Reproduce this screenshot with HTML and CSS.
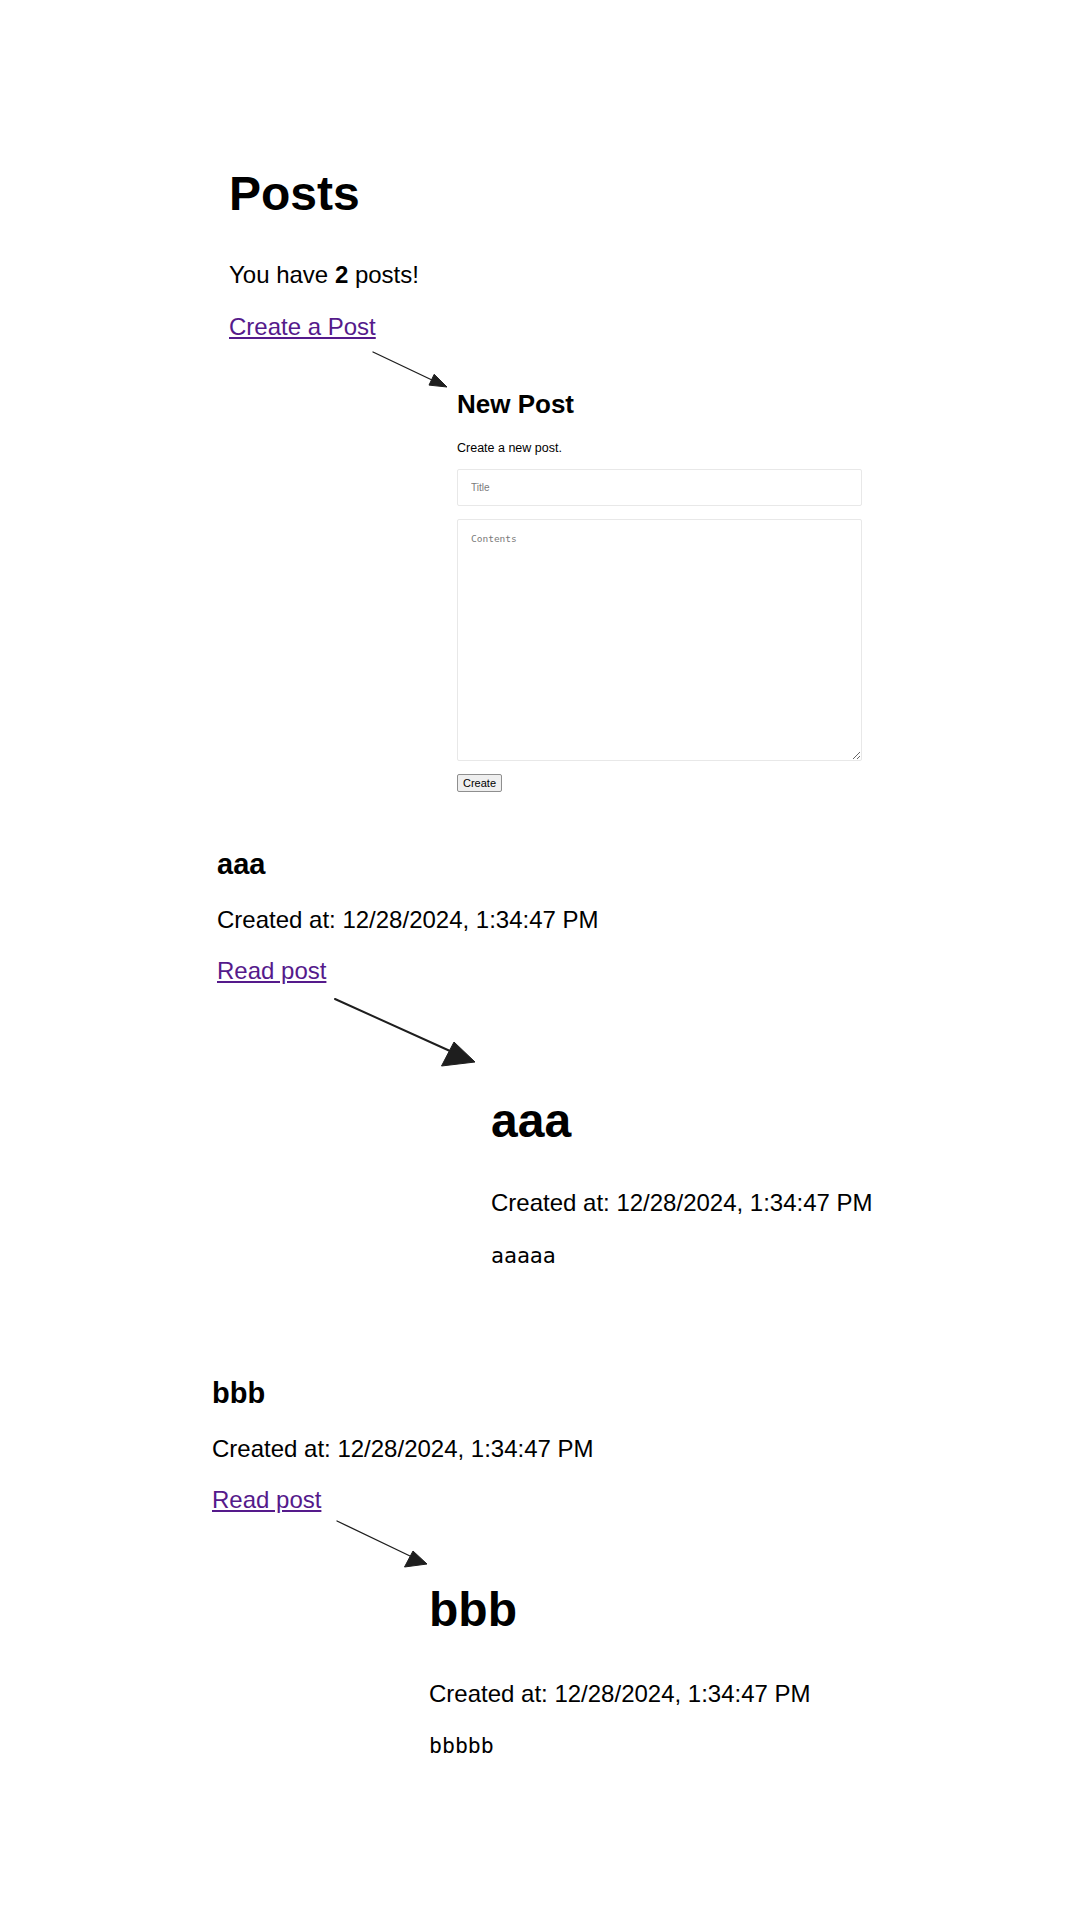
FILE: index.html
```html
<!DOCTYPE html>
<html lang="en">
<head>
<meta charset="utf-8">
<title>Posts</title>
<link rel="stylesheet" href="styles.css">
</head>
<body>
<svg class="arrows" width="1080" height="1920" viewBox="0 0 1080 1920" aria-hidden="true">
  <line x1="373" y1="352" x2="433" y2="380.5" class="shaft thin"/>
  <polygon points="447,387 429,385.1 434.2,374.3" class="head"/>
  <line x1="335" y1="999" x2="450" y2="1051" class="shaft thick"/>
  <polygon points="475,1062 441.5,1066 454,1042" class="head"/>
  <line x1="337" y1="1521" x2="410" y2="1556" class="shaft thin"/>
  <polygon points="427,1564 404.5,1567 413,1551" class="head"/>
</svg>
<main class="page">
  <section class="posts-index">
    <h1 class="title-xl">Posts</h1>
    <p class="line count">You have <b>2</b> posts!</p>
    <p class="line link-line"><a href="#" class="link">Create a Post</a></p>
  </section>

  <section class="new-post">
    <h2 class="new-title">New Post</h2>
    <p class="new-desc">Create a new post.</p>
    <form class="form">
      <input class="field" type="text" placeholder="Title">
      <textarea class="area" placeholder="Contents"></textarea>
      <button class="btn" type="button">Create</button>
    </form>
  </section>

  <article class="summary summary-a">
    <h3 class="summary-title">aaa</h3>
    <p class="line created">Created at: 12/28/2024, 1:34:47 PM</p>
    <p class="line read"><a href="#" class="link">Read post</a></p>
  </article>

  <article class="detail detail-a">
    <h1 class="title-xl">aaa</h1>
    <p class="line created">Created at: 12/28/2024, 1:34:47 PM</p>
    <p class="body-text">aaaaa</p>
  </article>

  <article class="summary summary-b">
    <h3 class="summary-title">bbb</h3>
    <p class="line created">Created at: 12/28/2024, 1:34:47 PM</p>
    <p class="line read"><a href="#" class="link">Read post</a></p>
  </article>

  <article class="detail detail-b">
    <h1 class="title-xl">bbb</h1>
    <p class="line created">Created at: 12/28/2024, 1:34:47 PM</p>
    <p class="body-text">bbbbb</p>
  </article>
</main>
</body>
</html>
```
FILE: styles.css
```css
html, body {
  margin: 0;
  padding: 0;
  background: #ffffff;
}

body {
  position: relative;
  width: 1080px;
  min-height: 1920px;
  font-family: "Liberation Sans", Arial, sans-serif;
  color: #000000;
}

.arrows {
  position: absolute;
  top: 0;
  left: 0;
  pointer-events: none;
}

.shaft {
  stroke: #1e1e1e;
  stroke-linecap: round;
}

.shaft.thin { stroke-width: 1.3; }
.shaft.thick { stroke-width: 2; }

.head {
  fill: #1e1e1e;
  stroke: #1e1e1e;
  stroke-width: 1;
  stroke-linejoin: round;
}

.page {
  padding-top: 165px;
  display: flex;
  flex-direction: column;
  align-items: flex-start;
}

h1, h2, h3, p { margin: 0; }

.title-xl {
  font-size: 48px;
  line-height: 58px;
  font-weight: 700;
}

.line {
  font-size: 24px;
  line-height: 29px;
}

.link {
  color: #551a8b;
  text-decoration: underline;
}

/* Posts index */
.posts-index { padding-left: 229px; }
.posts-index .count { margin-top: 37px; }
.posts-index .link-line { margin-top: 23px; }

/* New post form */
.new-post {
  margin-top: 48px;
  padding-left: 457px;
}

.new-title {
  font-size: 26px;
  line-height: 30px;
  font-weight: 700;
}

.new-desc {
  margin-top: 22px;
  font-size: 12.5px;
  line-height: 15px;
}

.form {
  margin-top: 13px;
  display: flex;
  flex-direction: column;
  align-items: flex-start;
  gap: 13px;
}

.field, .area {
  box-sizing: border-box;
  width: 405px;
  margin: 0;
  border: 1px solid #e8e8e8;
  border-radius: 2px;
  background: #ffffff;
  outline: none;
}

.field {
  height: 37px;
  padding: 0 13px;
  font-family: "Liberation Sans", Arial, sans-serif;
  font-size: 10px;
}

.area {
  height: 242px;
  padding: 13px 13px;
  font-family: "DejaVu Sans Mono", "Liberation Mono", monospace;
  font-size: 9.5px;
  line-height: 12px;
  resize: vertical;
}

.field::placeholder,
.area::placeholder {
  color: #7a7a7a;
}

.btn {
  box-sizing: border-box;
  height: 18px;
  padding: 0 5px;
  font-family: "Liberation Sans", Arial, sans-serif;
  font-size: 11px;
  line-height: 14px;
  color: #000000;
  background: #efefef;
  border: 1px solid #8f8f8f;
  border-radius: 2px;
}

/* Post summaries */
.summary-title {
  font-size: 29px;
  line-height: 35px;
  font-weight: 700;
}

.summary .created { margin-top: 23px; }
.summary .read { margin-top: 22px; }

.summary-a {
  margin-top: 55px;
  padding-left: 217px;
}

.summary-b {
  margin-top: 108px;
  padding-left: 212px;
}

/* Post details */
.body-text {
  font-family: "DejaVu Sans Mono", "Liberation Mono", monospace;
  font-size: 21.5px;
  line-height: 24px;
}

.detail-a {
  margin-top: 107px;
  padding-left: 491px;
}
.detail-a .created { margin-top: 38px; }
.detail-a .body-text { margin-top: 27px; }

.detail-b {
  margin-top: 67px;
  padding-left: 429px;
}
.detail-b .created { margin-top: 40px; }
.detail-b .body-text { margin-top: 26px; }
```
